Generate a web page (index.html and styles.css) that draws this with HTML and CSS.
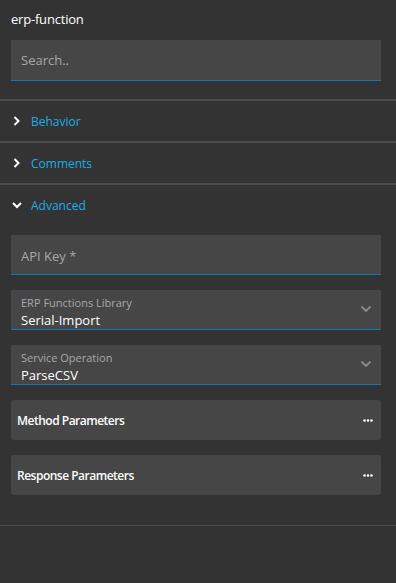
FILE: index.html
```html
<!DOCTYPE html>
<html lang="en">
<head>
  <meta charset="UTF-8">
  <meta name="viewport" content="width=device-width, initial-scale=1.0">
  <title>erp-function</title>
  <link rel="stylesheet" href="styles.css">
</head>
<body>
  <div class="panel">
    <!-- Header -->
    <div class="head">
      <div class="title">erp-function</div>
      <div class="field">
        <input class="text-input" type="text" placeholder="Search..">
      </div>
    </div>

    <!-- Behavior -->
    <div class="section">
      <div class="section-head">
        <svg class="chev" width="10" height="12" viewBox="0 0 10 12"><path d="M2.5 2 L6.5 6 L2.5 10" fill="none" stroke="#fff" stroke-width="2"/></svg>
        <span>Behavior</span>
      </div>
    </div>

    <!-- Comments -->
    <div class="section">
      <div class="section-head">
        <svg class="chev" width="10" height="12" viewBox="0 0 10 12"><path d="M2.5 2 L6.5 6 L2.5 10" fill="none" stroke="#fff" stroke-width="2"/></svg>
        <span>Comments</span>
      </div>
    </div>

    <!-- Advanced -->
    <div class="section open">
      <div class="section-head">
        <svg class="chev" width="10" height="12" viewBox="0 0 10 12"><path d="M1 4 L5 8 L9 4" fill="none" stroke="#fff" stroke-width="2"/></svg>
        <span>Advanced</span>
      </div>
      <div class="section-body">
        <div class="field">
          <input class="text-input low" type="text" placeholder="API Key *">
        </div>
        <div class="field select">
          <div class="sel-label">ERP Functions Library</div>
          <div class="sel-value">Serial-Import</div>
          <svg class="sel-arrow" width="12" height="8" viewBox="0 0 12 8"><path d="M1.5 1.5 L6 6 L10.5 1.5" fill="none" stroke="#8a8a8a" stroke-width="1.8"/></svg>
        </div>
        <div class="field select">
          <div class="sel-label">Service Operation</div>
          <div class="sel-value">ParseCSV</div>
          <svg class="sel-arrow" width="12" height="8" viewBox="0 0 12 8"><path d="M1.5 1.5 L6 6 L10.5 1.5" fill="none" stroke="#8a8a8a" stroke-width="1.8"/></svg>
        </div>
        <div class="param">
          <span>Method Parameters</span>
          <svg class="dots" width="10" height="3" viewBox="0 0 10 3"><circle cx="1.5" cy="1.5" r="1.3" fill="#fff"/><circle cx="5" cy="1.5" r="1.3" fill="#fff"/><circle cx="8.5" cy="1.5" r="1.3" fill="#fff"/></svg>
        </div>
        <div class="param">
          <span>Response Parameters</span>
          <svg class="dots" width="10" height="3" viewBox="0 0 10 3"><circle cx="1.5" cy="1.5" r="1.3" fill="#fff"/><circle cx="5" cy="1.5" r="1.3" fill="#fff"/><circle cx="8.5" cy="1.5" r="1.3" fill="#fff"/></svg>
        </div>
      </div>
    </div>
  </div>
</body>
</html>
```

FILE: styles.css
```css
html, body {
  margin: 0;
  background-color: #333333;
  height: 100%;
}
body {
  font-family: "Open Sans", "Noto Sans", Arial, sans-serif;
  color: #ffffff;
}
.panel {
  width: 396px;
}
.head {
  padding: 9px 15px 18px 11px;
}
.title {
  font-size: 13px;
  line-height: 20px;
  height: 20px;
  margin-bottom: 11px;
  letter-spacing: -0.2px;
}
.field {
  background-color: #464646;
  border-bottom: 1px solid #1177bb;
  height: 40px;
  box-sizing: border-box;
  margin-bottom: 15px;
}
.head .field {
  margin-bottom: 0;
  height: 41px;
}
.text-input {
  width: 100%;
  height: 100%;
  box-sizing: border-box;
  border: none;
  outline: none;
  background: transparent;
  padding: 0 10px;
  font-family: inherit;
  font-size: 13px;
  color: #ffffff;
}
.text-input.low {
  padding-top: 3px;
}
.text-input::placeholder {
  color: #a8a8a8;
}
.section {
  border-top: 2px solid #4d4d4d;
}
.section:first-of-type {
  border-top-width: 1px;
}
.section-head {
  height: 40px;
  display: flex;
  align-items: center;
  padding-left: 12px;
  gap: 9px;
  font-size: 12px;
  color: #1aaee6;
}
.chev {
  flex: none;
}
.open {
  border-bottom: 1px solid #4d4d4d;
}
.section-body {
  padding: 10px 15px 15px 11px;
}
.select {
  position: relative;
  padding: 5px 10px 0;
}
.sel-label {
  font-size: 11px;
  line-height: 15px;
  color: #a8a8a8;
}
.sel-value {
  font-size: 13px;
  line-height: 17px;
  margin-top: 2px;
  color: #ffffff;
}
.sel-arrow {
  position: absolute;
  right: 9px;
  top: 15px;
}
.param {
  height: 40px;
  background-color: #464646;
  border-radius: 3px;
  display: flex;
  align-items: center;
  justify-content: space-between;
  padding: 0 8px 0 6px;
  margin-bottom: 15px;
  font-size: 12px;
  font-weight: 600;
  letter-spacing: -0.5px;
}
.dots {
  flex: none;
}
```
